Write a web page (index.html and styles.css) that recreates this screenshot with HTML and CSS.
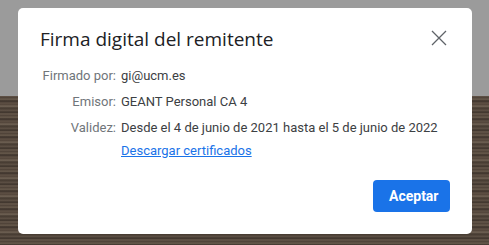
FILE: index.html
```html
<!DOCTYPE html>
<html>
<head>
  <title>Firma digital del remitente</title>
  <link rel="stylesheet" href="styles.css">
</head>
<body>
  <div class="backdrop">
    <div class="top-band"></div>
    <div class="wood"></div>
  </div>

  <div class="dialog" role="dialog" aria-label="Firma digital del remitente">
    <div class="dialog-header">
      <h2>Firma digital del remitente</h2>
      <button class="close-btn" title="Cerrar" aria-label="Cerrar">
        <svg width="16" height="16" viewBox="0 0 16 16">
          <path d="M1 1 L15 15 M15 1 L1 15" stroke="#5f6368" stroke-width="1.3" fill="none"/>
        </svg>
      </button>
    </div>

    <div class="details">
      <span class="label">Firmado por:</span>
      <span class="value">gi@ucm.es</span>
      <span class="label">Emisor:</span>
      <span class="value">GEANT Personal CA 4</span>
      <span class="label">Validez:</span>
      <span class="value">Desde el 4 de junio de 2021 hasta el 5 de junio de 2022</span>
      <span></span>
      <a class="value link" href="#">Descargar certificados</a>
    </div>

    <div class="dialog-footer">
      <button class="primary-btn">Aceptar</button>
    </div>
  </div>
</body>
</html>
```

FILE: styles.css
```css
html, body {
  margin: 0;
  height: 100%;
}
body {
  font-family: Roboto, Arial, sans-serif;
  font-size: 13px;
  overflow: hidden;
  position: relative;
}
.backdrop {
  display: flex;
  flex-direction: column;
  height: 100%;
}
.top-band {
  height: 96px;
  background-color: #9b9b9b;
}
.wood {
  flex: 1;
  background-color: #584a3e;
  background-image: repeating-linear-gradient(
    180deg,
    #64564a 0px,
    #4a3e34 2px,
    #6f6152 3px,
    #3a3029 5px,
    #5e5044 7px,
    #52453a 9px,
    #76685a 10px,
    #443930 12px,
    #5f5246 15px,
    #352c25 16px,
    #6a5c4e 18px
  );
}
.dialog {
  position: absolute;
  top: 8px;
  left: 18px;
  width: 454px;
  height: 226px;
  box-sizing: border-box;
  background-color: white;
  border-radius: 5px;
  padding: 18px 22px 22px 22px;
  display: flex;
  flex-direction: column;
}
.dialog-header {
  display: flex;
  justify-content: space-between;
  align-items: flex-start;
}
h2 {
  margin: 0;
  font-family: "Open Sans", Roboto, sans-serif;
  font-weight: 400;
  font-size: 19px;
  color: #202124;
}
.close-btn {
  background: transparent;
  border: none;
  padding: 4px;
  margin: 0 -1px 0 0;
  cursor: pointer;
  display: flex;
}
.details {
  display: grid;
  grid-template-columns: 76px auto;
  column-gap: 5px;
  row-gap: 9px;
  margin-top: 15px;
  line-height: 17px;
}
.label {
  text-align: right;
  color: #70757a;
}
.value {
  color: #3c4043;
}
.link {
  color: #1a73e8;
  text-decoration: underline;
  margin-top: -3px;
}
.dialog-footer {
  margin-top: auto;
  display: flex;
  justify-content: flex-end;
}
.primary-btn {
  background-color: #1a73e8;
  color: white;
  border: none;
  border-radius: 4px;
  font-family: Roboto, Arial, sans-serif;
  font-weight: 700;
  font-size: 14px;
  padding: 0 16px;
  height: 32px;
  width: 77px;
  cursor: pointer;
}
```
